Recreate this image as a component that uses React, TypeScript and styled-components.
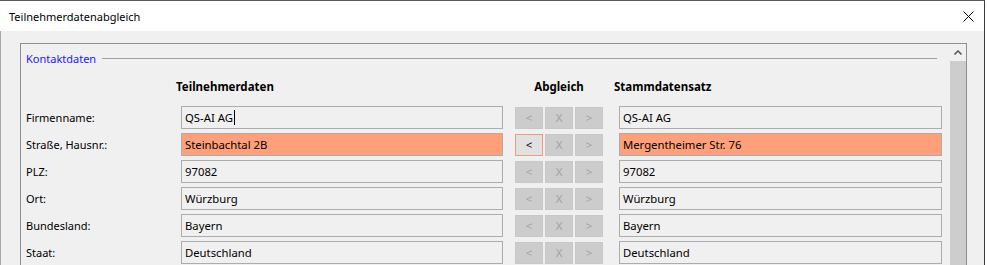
import React from 'react';
import styled, { createGlobalStyle } from 'styled-components';

const GlobalStyle = createGlobalStyle`
	html, body {
		margin: 0;
		padding: 0;
		background: #ffffff;
		overflow: hidden;
	}
	body {
		font-family: "Noto Sans", "Open Sans", Arial, sans-serif;
		font-size: 11px;
		color: #000;
	}
`;

const Window = styled.div`
	width: 985px;
	height: 265px;
	border-top: 1px solid #5a5a5a;
	border-right: 1px solid #3c3c3c;
	display: flex;
	flex-direction: column;
	overflow: hidden;
	box-sizing: border-box;
`;

const TitleBar = styled.div`
	height: 30px;
	flex: none;
	background: #ffffff;
	display: flex;
	align-items: center;
	justify-content: space-between;
	padding: 0 10px 0 9px;
`;

const Title = styled.span`
	font-size: 11px;
	color: #000;
`;

const Body = styled.div`
	flex: 1;
	background: #f0f0f0;
	border-left: 1px solid #a8a8a8;
	padding: 12px 0 0 19px;
`;

const Panel = styled.div`
	width: 945px;
	height: 240px;
	border: 1px solid #8c8f96;
	border-bottom: none;
	display: flex;
`;

const Content = styled.div`
	flex: 1;
	min-width: 0;
	padding: 6px 8px 0 5px;
`;

const GroupHeader = styled.div`
	display: flex;
	align-items: center;
	height: 16px;
	gap: 6px;
	margin-right: 5px;
`;

const GroupTitle = styled.span`
	color: #1a1aff;
`;

const GroupLine = styled.div`
	flex: 1;
	height: 1px;
	background: #a0a0a0;
`;

const Grid = styled.div`
	display: grid;
	grid-template-columns: 155px 322px auto 323px;
	row-gap: 4px;
	margin-top: 13px;
`;

const Row = styled.div`
	display: contents;
`;

const ColHead = styled.div<{ $center?: boolean }>`
	font-weight: bold;
	font-size: 11.5px;
	height: 16px;
	line-height: 16px;
	margin: ${p => (p.$center ? '0 16px 7px 12px' : '0 0 7px -5px')};
	text-align: ${p => (p.$center ? 'center' : 'left')};
`;

const Label = styled.div`
	display: flex;
	align-items: center;
	height: 23px;
`;

const Field = styled.div<{ $diff?: boolean }>`
	height: 23px;
	box-sizing: border-box;
	border: 1px solid #acacac;
	background: ${p => (p.$diff ? '#ffa07a' : '#f0f0f0')};
	display: flex;
	align-items: center;
	padding-left: 3px;
	white-space: nowrap;
	overflow: hidden;
	font-size: 11.3px;
`;

const Caret = styled.span`
	display: inline-block;
	width: 1px;
	height: 15px;
	background: #000;
	margin-left: 1px;
`;

const ButtonGroup = styled.div`
	display: flex;
	gap: 2px;
	align-items: center;
	margin: 0 16px 0 12px;
`;

const SyncButton = styled.button<{ $active?: boolean }>`
	width: 28px;
	height: 22px;
	padding: 0;
	box-sizing: border-box;
	font-family: "Noto Sans", Arial, sans-serif;
	font-size: 11.5px;
	border: 1px solid ${p => (p.$active ? '#f29b7c' : '#c8c8c8')};
	background: ${p => (p.$active ? '#e1e1e1' : '#cccccc')};
	color: ${p => (p.$active ? '#000' : '#a2a2a2')};
	display: flex;
	align-items: center;
	justify-content: center;
`;

const ScrollBar = styled.div`
	width: 16px;
	flex: none;
	display: flex;
	flex-direction: column;
`;

const ScrollArrow = styled.div`
	height: 17px;
	display: flex;
	align-items: center;
	justify-content: center;
`;

const ScrollThumb = styled.div`
	flex: 1;
	background: #cdcdcd;
`;

type RowData = {
	label: string;
	left: string;
	right: string;
	diff?: boolean;
	focus?: boolean;
};

const rows: RowData[] = [
	{ label: 'Firmenname:', left: 'QS-AI AG', right: 'QS-AI AG', focus: true },
	{ label: 'Straße, Hausnr.:', left: 'Steinbachtal 2B', right: 'Mergentheimer Str. 76', diff: true },
	{ label: 'PLZ:', left: '97082', right: '97082' },
	{ label: 'Ort:', left: 'Würzburg', right: 'Würzburg' },
	{ label: 'Bundesland:', left: 'Bayern', right: 'Bayern' },
	{ label: 'Staat:', left: 'Deutschland', right: 'Deutschland' },
];

const App = () => {
	return (
		<>
			<GlobalStyle />
			<Window>
				<TitleBar>
					<Title>Teilnehmerdatenabgleich</Title>
					<svg width="11" height="11" viewBox="0 0 11 11">
						<path d="M0.5 0.5 L10.5 10.5 M10.5 0.5 L0.5 10.5" stroke="#000" strokeWidth="1" fill="none" />
					</svg>
				</TitleBar>
				<Body>
					<Panel>
						<Content>
							<GroupHeader>
								<GroupTitle>Kontaktdaten</GroupTitle>
								<GroupLine />
							</GroupHeader>
							<Grid>
								<Row>
									<div />
									<ColHead>Teilnehmerdaten</ColHead>
									<ColHead $center>Abgleich</ColHead>
									<ColHead>Stammdatensatz</ColHead>
								</Row>
								{rows.map(r => (
									<Row key={r.label}>
										<Label>{r.label}</Label>
										<Field $diff={r.diff}>
											{r.left}
											{r.focus && <Caret />}
										</Field>
										<ButtonGroup>
											<SyncButton $active={r.diff}>&lt;</SyncButton>
											<SyncButton>X</SyncButton>
											<SyncButton>&gt;</SyncButton>
										</ButtonGroup>
										<Field $diff={r.diff}>{r.right}</Field>
									</Row>
								))}
							</Grid>
						</Content>
						<ScrollBar>
							<ScrollArrow>
								<svg width="8" height="5" viewBox="0 0 8 5">
									<path d="M0.5 4.5 L4 1 L7.5 4.5" stroke="#606060" strokeWidth="1.6" fill="none" />
								</svg>
							</ScrollArrow>
							<ScrollThumb />
						</ScrollBar>
					</Panel>
				</Body>
			</Window>
		</>
	);
};

export default App;
